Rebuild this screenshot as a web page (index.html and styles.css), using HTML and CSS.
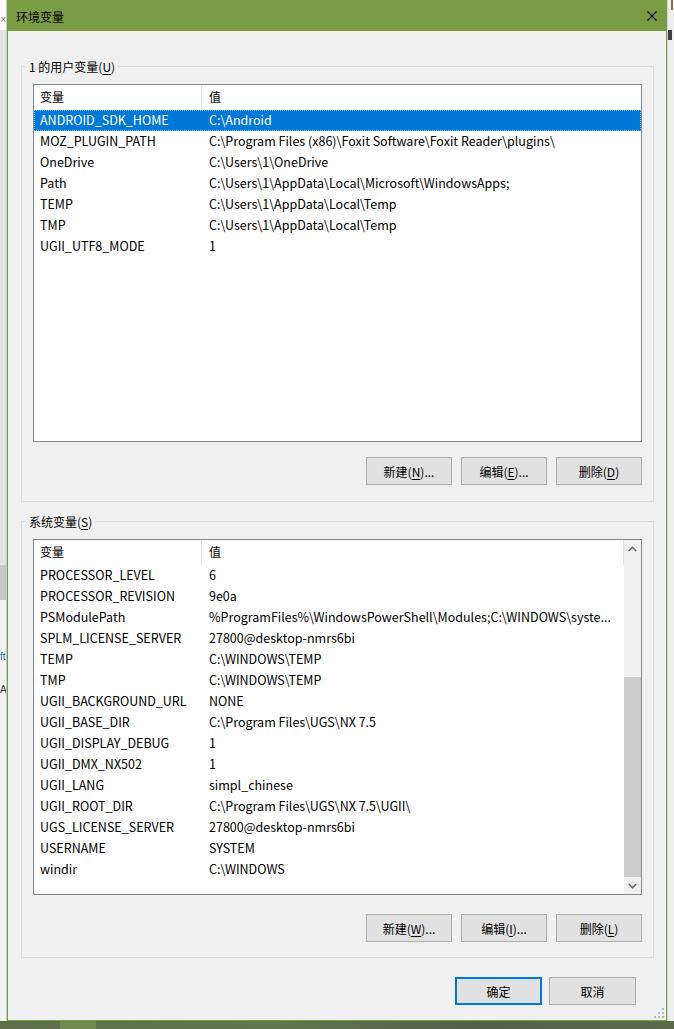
FILE: index.html
```html
<!DOCTYPE html>
<html lang="zh-CN">
<head>
<meta charset="utf-8">
<title>环境变量</title>
<link rel="stylesheet" href="styles.css">
</head>
<body>
<div class="screen">
  <div class="side side-left">
    <div class="bg-top"><span class="bg-x">×</span></div>
    <div class="bg-mid"></div>
    <div class="bg-block"></div>
    <div class="bg-low"><span class="bg-link">ft</span><span class="bg-a">A</span></div>
  </div>
  <div class="window">
    <div class="titlebar">
      <span class="title">环境变量</span>
      <svg class="close" width="10" height="10" viewBox="0 0 10 10"><path d="M0.5 0.5L9.5 9.5M9.5 0.5L0.5 9.5" stroke="#000" stroke-width="1.1" fill="none"/></svg>
    </div>
    <div class="client">
      <div class="group group-user">
        <div class="legend">1 的用户变量(<u>U</u>)</div>
        <div class="list list-user">
          <div class="list-body">
            <div class="row hdr"><span class="c1">变量</span><span class="c2">值</span></div>
            <div class="row sel"><span class="c1">ANDROID_SDK_HOME</span><span class="c2">C:\Android</span></div>
            <div class="row"><span class="c1">MOZ_PLUGIN_PATH</span><span class="c2">C:\Program Files (x86)\Foxit Software\Foxit Reader\plugins\</span></div>
            <div class="row"><span class="c1">OneDrive</span><span class="c2">C:\Users\1\OneDrive</span></div>
            <div class="row"><span class="c1">Path</span><span class="c2">C:\Users\1\AppData\Local\Microsoft\WindowsApps;</span></div>
            <div class="row"><span class="c1">TEMP</span><span class="c2">C:\Users\1\AppData\Local\Temp</span></div>
            <div class="row"><span class="c1">TMP</span><span class="c2">C:\Users\1\AppData\Local\Temp</span></div>
            <div class="row"><span class="c1">UGII_UTF8_MODE</span><span class="c2">1</span></div>
          </div>
        </div>
        <div class="btn-row">
          <div class="btn">新建(<u>N</u>)...</div>
          <div class="btn">编辑(<u>E</u>)...</div>
          <div class="btn">删除(<u>D</u>)</div>
        </div>
      </div>

      <div class="group group-sys">
        <div class="legend">系统变量(<u>S</u>)</div>
        <div class="list list-sys">
          <div class="list-body">
            <div class="row hdr"><span class="c1">变量</span><span class="c2">值</span></div>
            <div class="row"><span class="c1">PROCESSOR_LEVEL</span><span class="c2">6</span></div>
            <div class="row"><span class="c1">PROCESSOR_REVISION</span><span class="c2">9e0a</span></div>
            <div class="row"><span class="c1">PSModulePath</span><span class="c2">%ProgramFiles%\WindowsPowerShell\Modules;C:\WINDOWS\syste...</span></div>
            <div class="row"><span class="c1">SPLM_LICENSE_SERVER</span><span class="c2">27800@desktop-nmrs6bi</span></div>
            <div class="row"><span class="c1">TEMP</span><span class="c2">C:\WINDOWS\TEMP</span></div>
            <div class="row"><span class="c1">TMP</span><span class="c2">C:\WINDOWS\TEMP</span></div>
            <div class="row"><span class="c1">UGII_BACKGROUND_URL</span><span class="c2">NONE</span></div>
            <div class="row"><span class="c1">UGII_BASE_DIR</span><span class="c2">C:\Program Files\UGS\NX 7.5</span></div>
            <div class="row"><span class="c1">UGII_DISPLAY_DEBUG</span><span class="c2">1</span></div>
            <div class="row"><span class="c1">UGII_DMX_NX502</span><span class="c2">1</span></div>
            <div class="row"><span class="c1">UGII_LANG</span><span class="c2">simpl_chinese</span></div>
            <div class="row"><span class="c1">UGII_ROOT_DIR</span><span class="c2">C:\Program Files\UGS\NX 7.5\UGII\</span></div>
            <div class="row"><span class="c1">UGS_LICENSE_SERVER</span><span class="c2">27800@desktop-nmrs6bi</span></div>
            <div class="row"><span class="c1">USERNAME</span><span class="c2">SYSTEM</span></div>
            <div class="row"><span class="c1">windir</span><span class="c2">C:\WINDOWS</span></div>
          </div>
          <div class="vscroll">
            <div class="arrow">
              <svg width="9" height="6" viewBox="0 0 9 6"><path d="M0.8 5L4.5 1.3L8.2 5" stroke="#606060" stroke-width="1.4" fill="none"/></svg>
            </div>
            <div class="track"><div class="thumb"></div></div>
            <div class="arrow">
              <svg width="9" height="6" viewBox="0 0 9 6"><path d="M0.8 1L4.5 4.7L8.2 1" stroke="#606060" stroke-width="1.4" fill="none"/></svg>
            </div>
          </div>
        </div>
        <div class="btn-row">
          <div class="btn">新建(<u>W</u>)...</div>
          <div class="btn">编辑(<u>I</u>)...</div>
          <div class="btn">删除(<u>L</u>)</div>
        </div>
      </div>

      <div class="dlg-row">
        <div class="btn btn-dlg btn-default">确定</div>
        <div class="btn btn-dlg">取消</div>
      </div>
      <svg class="grip" width="10" height="10" viewBox="0 0 10 10">
        <g fill="#b8b8b8">
          <rect x="8" y="0" width="2" height="2"/>
          <rect x="4" y="4" width="2" height="2"/><rect x="8" y="4" width="2" height="2"/>
          <rect x="0" y="8" width="2" height="2"/><rect x="4" y="8" width="2" height="2"/><rect x="8" y="8" width="2" height="2"/>
        </g>
      </svg>
    </div>
  </div>
  <div class="side side-right">
    <div class="rt-top"></div>
    <div class="rt-gap"></div>
    <div class="rt-icon"></div>
    <div class="rt-rest"></div>
  </div>
</div>
<div class="desktop"><div class="dk-a"></div><div class="dk-b"></div><div class="dk-c"></div></div>
</body>
</html>
```

FILE: styles.css
```css
* { box-sizing: border-box; }
html, body { margin: 0; padding: 0; }
body {
  width: 674px;
  height: 1029px;
  overflow: hidden;
  font-family: "Noto Sans CJK SC", "Noto Sans", sans-serif;
  font-size: 12px;
  color: #000;
  background: #e9e9e9;
}
u { text-decoration: underline; text-underline-offset: 2px; }

.screen { display: flex; height: 1021px; }

/* background windows */
.side { width: 7px; flex: none; display: flex; flex-direction: column; overflow: hidden; }
.side-left { background: #e6e6e6; border-right: 1px solid #c9c9c9; }
.bg-top { height: 30px; background: #fbfbfb; display: flex; align-items: flex-end; padding-bottom: 5px; }
.bg-x { font-size: 8px; line-height: 10px; color: #777; font-family: "DejaVu Sans", sans-serif; }
.bg-mid { height: 535px; background: #e3e3e3; }
.bg-block { height: 35px; background: #c9c9c9; }
.bg-low { flex: 1; background: #f4f4f4; display: flex; flex-direction: column; padding-top: 50px; }
.bg-link { color: #2a6ebb; font-family: "Liberation Sans", sans-serif; font-size: 10px; line-height: 14px; }
.bg-a { color: #333; font-family: "Liberation Sans", sans-serif; font-size: 10px; line-height: 14px; margin-top: 19px; }

.side-right { background: #eeeeee; border-left: 1px solid #d4d4d4; }
.rt-top { height: 10px; background: #8a6f52; width: 2px; margin-left: 3px; }
.rt-gap { height: 20px; }
.rt-icon { height: 10px; width: 4px; background: #3b3f48; }
.rt-rest { flex: 1; }

.desktop { height: 8px; display: flex; background: linear-gradient(90deg, #5d6d4b, #637550 40%, #536046 70%, #5c6a4c); }
.dk-a { width: 60px; }
.dk-b { width: 36px; background: #70894d; }
.dk-c { flex: 1; }

/* dialog window */
.window {
  width: 660px;
  flex: none;
  border: 1px solid #7a9c45;
  display: flex;
  flex-direction: column;
  background: #f0f0f0;
}
.titlebar {
  height: 30px;
  flex: none;
  background: #7a9c45;
  display: flex;
  align-items: center;
  justify-content: space-between;
  padding: 0 9px 0 8px;
}
.title { font-size: 12px; line-height: 17px; }
.close { display: block; }

.client {
  flex: 1;
  position: relative;
  display: flex;
  flex-direction: column;
  padding: 35px 12px 15px 13px;
}

.group {
  border: 1px solid #dcdcdc;
  display: flex;
  flex-direction: column;
  padding: 0 11px 16px 11px;
}
.group-sys { margin-top: 19px; padding-bottom: 15px; }
.legend {
  align-self: flex-start;
  margin: -9px 0 0 -7px;
  padding: 0 3px;
  background: #f0f0f0;
  line-height: 17px;
  height: 17px;
}

.list {
  margin-top: 9px;
  border: 1px solid #828790;
  background: #fff;
  display: flex;
}
.list-user { height: 358px; }
.list-sys { height: 356px; }
.list-body { flex: 1; min-width: 0; }

.row {
  display: grid;
  grid-template-columns: 168px 1fr;
  height: 21px;
  line-height: 19px;
  white-space: nowrap;
  font-size: 12.5px;
}
.row .c1 { padding-left: 6px; overflow: hidden; }
.row .c2 { padding-left: 7px; overflow: hidden; }
.row.hdr { height: 25px; line-height: 24px; font-size: 12px; }
.row.hdr .c1 { border-right: 1px solid #e5e5e5; }
.list-sys .row.hdr { border-right: 1px solid #e5e5e5; }
.row.sel { background: #0078d7; color: #fff; outline: 1px dotted #7fbdf0; outline-offset: -1px; }

.vscroll { width: 17px; flex: none; display: flex; flex-direction: column; background: #f0f0f0; }
.arrow { height: 17px; display: flex; align-items: center; justify-content: center; }
.track { flex: 1; display: flex; flex-direction: column; justify-content: flex-end; }
.thumb { height: 200px; background: #cdcdcd; }

.btn-row {
  margin-top: 15px;
  display: flex;
  justify-content: flex-end;
  gap: 9px;
}
.group-sys .btn-row { margin-top: 19px; }
.btn {
  width: 86px;
  height: 28px;
  border: 1px solid #adadad;
  background: #e1e1e1;
  display: flex;
  align-items: center;
  justify-content: center;
  line-height: 17px;
}

.dlg-row {
  margin-top: 19px;
  display: flex;
  justify-content: flex-end;
  gap: 7px;
  padding-right: 18px;
}
.btn-dlg { width: 87px; }
.btn-default { border: 2px solid #0078d7; }

.grip { position: absolute; right: 2px; bottom: 2px; }
```
